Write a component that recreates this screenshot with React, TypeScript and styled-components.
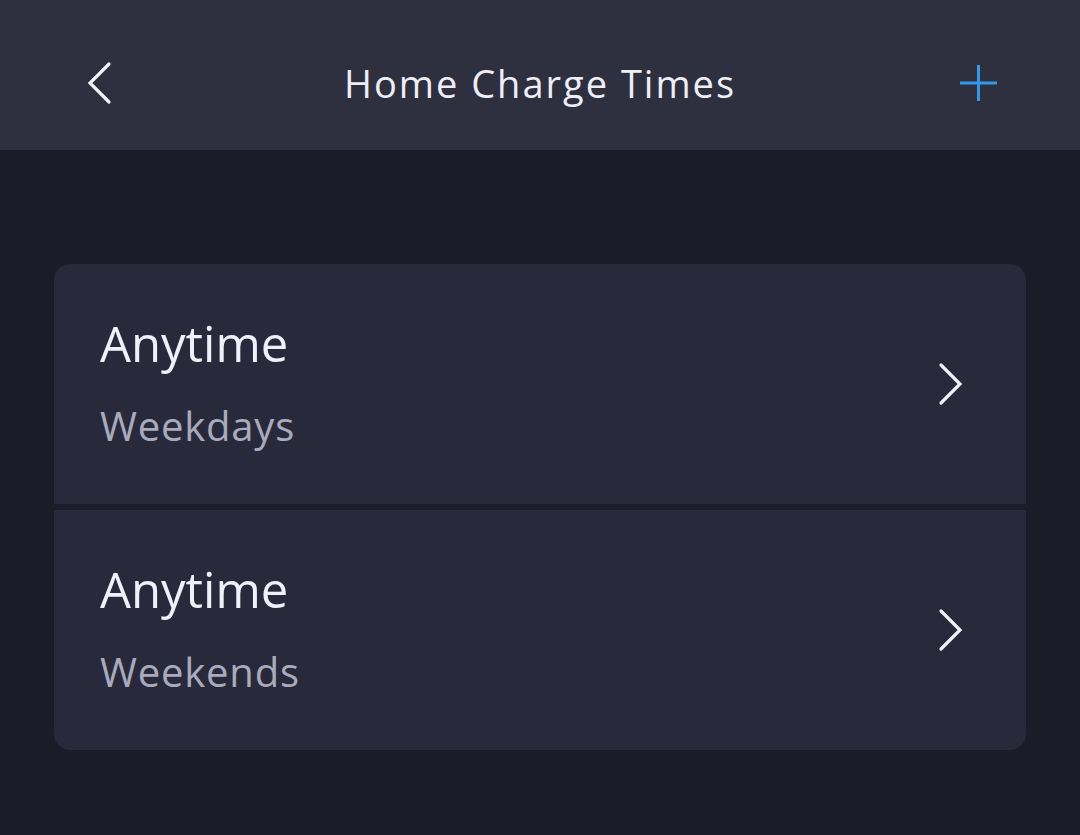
import React from "react";
import styled, { createGlobalStyle } from "styled-components";

const Global = createGlobalStyle`
  html, body { margin: 0; padding: 0; background: #1b1c27; }
  body { font-family: "Open Sans", "Noto Sans", sans-serif; }
`;

const Page = styled.div`
  width: 1080px;
  height: 835px;
  background: #1b1c27;
  display: flex;
  flex-direction: column;
`;

const Header = styled.header`
  height: 150px;
  box-sizing: border-box;
  padding-top: 16px;
  background: #2e303f;
  display: grid;
  grid-template-columns: 150px 1fr 150px;
  align-items: center;
`;

const IconButton = styled.button<{ $align: "start" | "end" }>`
  background: none;
  border: 0;
  padding: 0;
  display: flex;
  align-items: center;
  justify-content: ${(p) => (p.$align === "start" ? "flex-start" : "flex-end")};
  padding-left: ${(p) => (p.$align === "start" ? "86px" : "0")};
  padding-right: ${(p) => (p.$align === "end" ? "81px" : "0")};
  cursor: pointer;
`;

const Title = styled.h1`
  margin: 0;
  text-align: center;
  font-family: "Open Sans", sans-serif;
  font-weight: 400;
  font-size: 38px;
  line-height: 52px;
  letter-spacing: 2px;
  color: #eeeef8;
`;

const Content = styled.main`
  padding: 114px 54px 0 54px;
`;

const Card = styled.div`
  border-radius: 16px;
  overflow: hidden;
  display: flex;
  flex-direction: column;
  gap: 6px;
`;

const Row = styled.div`
  height: 240px;
  background: #282a3b;
  display: flex;
  align-items: center;
  justify-content: space-between;
  padding: 0 62px 0 46px;
  box-sizing: border-box;
`;

const Texts = styled.div`
  display: flex;
  flex-direction: column;
  gap: 28px;
  margin-top: -4px;
`;

const Primary = styled.div`
  font-family: "Open Sans", sans-serif;
  font-size: 49px;
  color: #eff0fa;
  line-height: 60px;
`;

const Secondary = styled.div`
  font-family: "Open Sans", sans-serif;
  font-size: 40px;
  color: #a9abbc;
  line-height: 50px;
  letter-spacing: 0.8px;
`;

const BackIcon = () => (
  <svg width="26" height="44" viewBox="0 0 26 44" fill="none">
    <path d="M23 3 L4 22 L23 41" stroke="#f2f2fa" strokeWidth="3.2" strokeLinecap="round" strokeLinejoin="miter" />
  </svg>
);

const PlusIcon = () => (
  <svg width="40" height="40" viewBox="0 0 40 40" fill="none">
    <path d="M19.5 2 V38 M1 20 H38" stroke="#3399ea" strokeWidth="3" />
  </svg>
);

const Chevron = () => (
  <svg width="26" height="44" viewBox="0 0 26 44" fill="none">
    <path d="M3 3 L22 22 L3 41" stroke="#f2f2fa" strokeWidth="3.2" strokeLinecap="round" />
  </svg>
);

const schedules = [
  { title: "Anytime", days: "Weekdays" },
  { title: "Anytime", days: "Weekends" },
];

export default function App() {
  return (
    <>
      <Global />
      <Page>
        <Header>
          <IconButton $align="start" aria-label="Back">
            <BackIcon />
          </IconButton>
          <Title>Home Charge Times</Title>
          <IconButton $align="end" aria-label="Add">
            <PlusIcon />
          </IconButton>
        </Header>
        <Content>
          <Card>
            {schedules.map((s) => (
              <Row key={s.days}>
                <Texts>
                  <Primary>{s.title}</Primary>
                  <Secondary>{s.days}</Secondary>
                </Texts>
                <Chevron />
              </Row>
            ))}
          </Card>
        </Content>
      </Page>
    </>
  );
}
